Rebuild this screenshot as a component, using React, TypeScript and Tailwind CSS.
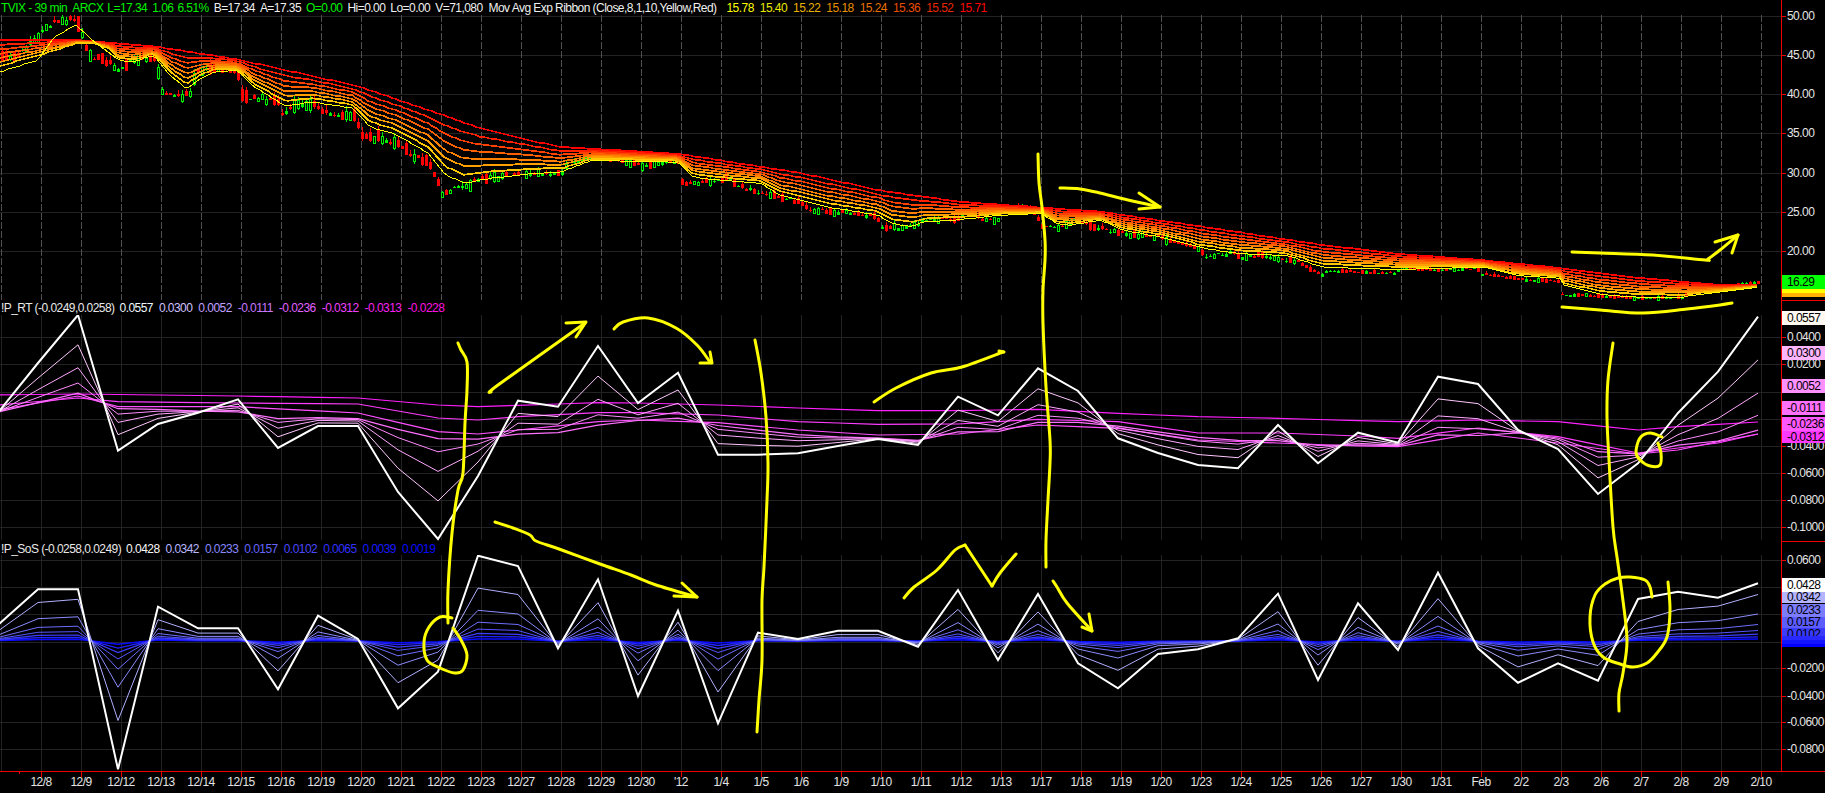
type Pt = [number, number];

const DATES = ["12/8","12/9","12/12","12/13","12/14","12/15","12/16","12/19","12/20","12/21","12/22","12/23","12/27","12/28","12/29","12/30","'12","1/4","1/5","1/6","1/9","1/10","1/11","1/12","1/13","1/17","1/18","1/19","1/20","1/23","1/24","1/25","1/26","1/27","1/30","1/31","Feb","2/2","2/3","2/6","2/7","2/8","2/9","2/10"];

const GRID_X = Array.from({ length: 45 }, (_, i) => 1.5 + 40 * i);
const dayX = (i: number) => -2 + 40 * i;

function lerp(pts: Pt[], x: number) {
  if (x <= pts[0][0]) return pts[0][1];
  for (let i = 1; i < pts.length; i++) {
    if (x <= pts[i][0]) {
      const [x0, y0] = pts[i - 1];
      const [x1, y1] = pts[i];
      return y0 + ((y1 - y0) * (x - x0)) / (x1 - x0 || 1);
    }
  }
  return pts[pts.length - 1][1];
}

const toPoints = (ys: number[]) => ys.map((y, i) => `${dayX(i)},${y.toFixed(1)}`).join(" ");

// top pane ribbon, read off the chart
const RED: Pt[] = [[0,40],[78,40],[156,46.7],[237,59.3],[357,86],[437,113],[482,129],[558,146.7],[600,149.3],[680,154],[800,173],[881,190.7],[961,202],[1041,207.7],[1100,211.7],[1202,226.7],[1322,245],[1400,254],[1480,260],[1560,268],[1640,278],[1720,285],[1757,285]];
const FAST: Pt[] = [[0,72],[38,60],[54,37],[76,25],[94,41.7],[118,60],[134,61.7],[154,55],[170,75],[187,89],[201,78],[214,71.7],[237,70],[254,86.7],[285,106],[312,101.7],[352,108],[370,126.7],[397,135],[428,153],[446,175],[464,183],[491,178],[535,173],[562,171.7],[593,160],[678,161.7],[693,177],[723,180],[760,183],[780,195],[801,200],[826,206.7],[853,210.7],[878,215],[893,224],[913,226],[925,221.7],[960,219.3],[1000,215],[1041,213],[1056,223],[1070,225],[1100,220],[1123,230],[1160,236.7],[1202,248],[1239,253.3],[1285,255],[1322,266.7],[1359,268],[1400,269],[1482,266.7],[1516,275],[1560,278],[1563,285],[1600,294],[1640,297],[1683,296.7],[1720,291.7],[1757,287.3]];
const CLUSTER: Pt[] = [[0,70],[38,58],[76,44],[94,43],[110,50],[118,60]];
const RIBBON_T = [0, 0.14, 0.28, 0.41, 0.55, 0.69, 0.84, 1];
const RIBBON_COLORS = ["#ffff00","#ffc800","#ffa000","#ff8000","#ff6000","#ff4000","#ff2000","#ff0000"];

const PRICE: Pt[] = [[0,58],[16,57],[27,48],[42,32],[54,23],[71,19],[77,17],[83,40],[89,52],[96,58],[109,63],[117,70],[134,60],[154,57],[157,70],[162,93],[170,95],[190,95],[196,73],[210,67],[230,70],[237,70],[243,97],[263,99],[277,100],[283,117],[295,103],[312,103],[326,112],[348,117],[355,113],[361,137],[384,138],[402,147],[411,155],[428,160],[435,173],[442,193],[455,187],[473,182],[504,175],[536,174],[562,173],[567,163],[598,155],[643,165],[678,160],[682,183],[710,182],[727,177],[733,183],[757,192],[780,196],[800,202],[813,210],[853,213],[877,217],[882,228],[900,227],[917,224],[922,219],[960,218],[967,209],[980,218],[997,221],[1001,210],[1033,208],[1042,227],[1067,226],[1073,218],[1097,227],[1123,233],[1160,237],[1199,248],[1204,256],[1234,252],[1239,257],[1262,255],[1299,262],[1322,275],[1327,270],[1396,273],[1401,267],[1438,270],[1480,268],[1482,274],[1507,277],[1533,280],[1560,280],[1562,294],[1600,296],[1640,298],[1683,297],[1690,292],[1722,287],[1757,282]];

// !P_RT series, one value per session
const RT_WHITE = [412.7,363,315,450.7,424,412.7,399.3,448,426,426,492,539,476,400.7,406.7,346,403,372.7,454.7,454.7,453.3,446,439,445,396.7,415.3,368.3,391,438.3,453,465,468.3,425,463.3,432.7,442.7,376.7,384,430,449,494,463.3,413,371.7,316.7];
const RT_BASE = [412,406,400,405,408,411,413,416,417,418,424,430,436,437,435,432,422,422,423,428,433,436,438,440,435,433,427,425,425,430,435,438,442,444,446,446,440,440,433,437,448,453,448,447,440];
const RT_FACTORS: [number, string, number][] = [
  [0.08, "#ff70ff", 1.2],
  [0.2, "#ff8cff", 1],
  [0.38, "#ffa8ff", 1],
  [0.65, "#ffc8ff", 1],
];
const RT_SLOW: { color: string; pts: Pt[] }[] = [
  { color: "#ff20ff", pts: [[-1,395],[1,394],[5,396],[8,398],[10,405],[11,406.7],[14,402.7],[15,403],[17,405],[19,408],[21,410.7],[23,410.7],[25,409.3],[27,413.3],[29,416.7],[31,418.3],[33,420.7],[34,421.7],[36,420],[38,421.7],[40,430],[41,426.7],[43,422]] },
  { color: "#ff3cff", pts: [[-1,405],[1,398],[2,401.7],[5,403],[8,404],[10,418],[11,420],[12,416.7],[14,412.7],[15,412.7],[17,415],[19,421.7],[21,424.3],[23,424],[25,419.3],[27,421.7],[29,433],[31,433],[33,436],[34,438.3],[36,428],[38,436.7],[40,453],[41,448],[42,443],[43,434]] },
  { color: "#ff50ff", pts: [[-1,410],[1,396],[2,406.7],[5,406.7],[8,413],[10,431.7],[11,434],[12,430],[14,421.7],[15,420],[17,422.7],[19,430],[21,435],[23,434],[25,425],[27,428.3],[29,440],[31,443],[33,446],[34,446.7],[36,433],[38,443],[40,454],[41,450],[42,441.7],[43,434]] },
];

// !P_SoS series
const SOS_WHITE = [625,589.3,589.3,769.3,606.7,628.3,628.3,689.3,615.7,639,708.3,671.7,555.7,566,648.3,579.3,696,610.7,723.3,632.7,639,630.7,630.7,646.7,590,660,594,663.3,688.3,654,649.3,638.3,593.7,680,603.3,650,572.7,648.3,682.7,663.3,680.7,599,591.7,597.7,583.3];
const SOS_ZERO = 641;
const SOS_RAMP: Record<number, number> = { 1: 1.2, 2: 1.3, 41: 0.75, 42: 1.03, 43: 1.3, 44: 1.3 };
const SOS_LINES: [number, string, number][] = [
  [0.025, "#0a0aff", 1.5],
  [0.055, "#2222ff", 1.3],
  [0.09, "#3c3cff", 1.2],
  [0.14, "#5555ff", 1],
  [0.22, "#6e6eff", 1],
  [0.36, "#8c8cff", 1],
  [0.62, "#b0b0ff", 1],
];

type Tag = { y: number; h: number; text: string; bg: string };

const TOP_LABELS: [string, number][] = [["50.00",16],["45.00",55],["40.00",94],["35.00",133],["30.00",173],["25.00",212],["20.00",251]];
const RT_LABELS: [string, number][] = [["0.0400",337],["0.0200",364],["-0.0400",446],["-0.0600",473],["-0.0800",500],["-0.1000",527]];
const SOS_LABELS: [string, number][] = [["0.0600",560],["-0.0200",668],["-0.0400",696],["-0.0600",722],["-0.0800",749]];

const TOP_TAGS: Tag[] = [
  { y: 289, h: 4, text: "", bg: "#ffff00" },
  { y: 293, h: 4, text: "", bg: "#ffb000" },
  { y: 275, h: 14, text: "16.29", bg: "#00ff00" },
];
const RT_TAGS: Tag[] = [
  { y: 311, h: 14, text: "0.0557", bg: "#fff8f0" },
  { y: 346, h: 14, text: "0.0300", bg: "#ffb4ff" },
  { y: 379, h: 14, text: "0.0052", bg: "#ff90ff" },
  { y: 401, h: 14, text: "-0.0111", bg: "#ff70ff" },
  { y: 417, h: 14, text: "-0.0236", bg: "#ff58ff" },
  { y: 431, h: 12, text: "-0.0312", bg: "#ff38ff" },
];
const SOS_TAGS: Tag[] = [
  { y: 578, h: 14, text: "0.0428", bg: "#ffffff" },
  { y: 592, h: 11, text: "0.0342", bg: "#b4b4ff" },
  { y: 604, h: 13, text: "0.0233", bg: "#7c7cff" },
  { y: 617, h: 11, text: "0.0157", bg: "#5c5cff" },
  { y: 628, h: 8, text: "0.0102", bg: "#3c3cff" },
  { y: 636, h: 4, text: "", bg: "#2828ff" },
  { y: 640, h: 4, text: "", bg: "#1414ff" },
  { y: 644, h: 3, text: "", bg: "#0000ff" },
];

const HEAD_TOP: { text: string; color: string; left: string }[] = [
  { text: "TVIX - 39 min", color: "text-[#00f000]", left: "ml-px" },
  { text: "ARCX", color: "text-[#00f000]", left: "ml-[5px]" },
  { text: "L=17.34", color: "text-[#00f000]", left: "ml-[4px]" },
  { text: "1.06", color: "text-[#00f000]", left: "ml-[5px]" },
  { text: "6.51%", color: "text-[#00f000]", left: "ml-[4px]" },
  { text: "B=17.34", color: "text-[#f0f0f0]", left: "ml-[5px]" },
  { text: "A=17.35", color: "text-[#f0f0f0]", left: "ml-[5px]" },
  { text: "O=0.00", color: "text-[#00f000]", left: "ml-[5px]" },
  { text: "Hi=0.00", color: "text-[#f0f0f0]", left: "ml-[5px]" },
  { text: "Lo=0.00", color: "text-[#f0f0f0]", left: "ml-[5px]" },
  { text: "V=71,080", color: "text-[#f0f0f0]", left: "ml-[5px]" },
  { text: "Mov Avg Exp Ribbon (Close,8,1,10,Yellow,Red)", color: "text-[#f0f0f0]", left: "ml-[6px]" },
  { text: "15.78", color: "text-[#ffff00]", left: "ml-[10px]" },
  { text: "15.40", color: "text-[#e8e800]", left: "ml-[6px]" },
  { text: "15.22", color: "text-[#e8b000]", left: "ml-[6px]" },
  { text: "15.18", color: "text-[#e89000]", left: "ml-[6px]" },
  { text: "15.24", color: "text-[#e87000]", left: "ml-[6px]" },
  { text: "15.36", color: "text-[#e84c00]", left: "ml-[6px]" },
  { text: "15.52", color: "text-[#e82800]", left: "ml-[6px]" },
  { text: "15.71", color: "text-[#ff0000]", left: "ml-[6px]" },
];
const HEAD_RT: [string, string][] = [["0.0557","text-[#f0f8ff]"],["0.0300","text-[#d0c0ff]"],["0.0052","text-[#c0a0ff]"],["-0.0111","text-[#c878ff]"],["-0.0236","text-[#e060ff]"],["-0.0312","text-[#f040ff]"],["-0.0313","text-[#f820f0]"],["-0.0228","text-[#ff10e0]"]];
const HEAD_SOS: [string, string][] = [["0.0428","text-[#f8f8f8]"],["0.0342","text-[#b8b8ff]"],["0.0233","text-[#8888ff]"],["0.0157","text-[#6464ff]"],["0.0102","text-[#4848ff]"],["0.0065","text-[#3030ff]"],["0.0039","text-[#1818ff]"],["0.0019","text-[#0808ff]"]];

// marker annotations drawn by hand over the chart
const SCRIBBLES: Pt[][] = [
  [[1572,252],[1600,253],[1653,255],[1705,260],[1708,259],[1720,250],[1738,235]],
  [[1562,307],[1600,310],[1643,313],[1687,309],[1720,305],[1732,303]],
  [[1038,154],[1039,183],[1042,207],[1045,240],[1045,260],[1043,290],[1043,323],[1046,387],[1050,440],[1050,463],[1048,500],[1046,540],[1046,567]],
  [[1060,188],[1080,189],[1100,193],[1128,200],[1160,207]],
  [[458,343],[461,350],[467,362],[467,390],[465,423],[463,473],[458,490],[452,533],[448,590],[448,623]],
  [[452,618],[440,617],[429,627],[424,642],[427,660],[440,668],[455,673],[463,670],[467,655],[461,640],[453,628]],
  [[491,392],[498,385],[585,323]],
  [[614,329],[623,322],[648,318],[676,328],[697,345],[710,362]],
  [[755,340],[761,373],[766,417],[768,463],[767,500],[764,567],[762,600],[762,660],[759,700],[757,732]],
  [[874,402],[896,388],[931,373],[962,367],[1003,352]],
  [[1613,343],[1608,380],[1607,417],[1609,460],[1613,527],[1617,557],[1622,593],[1627,640],[1623,673],[1619,693],[1619,711]],
  [[1662,437],[1650,433],[1640,438],[1636,452],[1640,460],[1650,466],[1660,465],[1661,453],[1658,443]],
  [[1652,597],[1650,587],[1645,580],[1630,577],[1618,578],[1605,584],[1595,595],[1590,617],[1593,642],[1603,657],[1620,664],[1633,667],[1647,663],[1657,653],[1667,637],[1670,610],[1668,582]],
  [[495,522],[513,528],[530,535],[536,541],[559,549],[600,564],[631,575],[656,585],[697,597]],
  [[904,598],[914,587],[937,570],[955,550],[965,545]],
  [[965,545],[992,586]],
  [[992,586],[1000,573],[1016,554]],
  [[1053,581],[1057,587],[1067,603],[1092,631]],
];
const HEADS: Pt[][] = [
  [[1715,242],[1738,235],[1732,253]],
  [[1139,193],[1160,207],[1139,209]],
  [[566,323],[586,322],[576,337]],
  [[710,352],[712,363],[700,363]],
  [[999,351],[1004,352]],
  [[682,583],[697,597],[674,596]],
  [[1089,614],[1092,631],[1082,627]],
];

function smooth(pts: Pt[]) {
  let d = `M${pts[0][0]} ${pts[0][1]}`;
  for (let i = 0; i < pts.length - 1; i++) {
    const p0 = pts[i - 1] ?? pts[i];
    const p1 = pts[i];
    const p2 = pts[i + 1];
    const p3 = pts[i + 2] ?? p2;
    const c1x = p1[0] + (p2[0] - p0[0]) / 6;
    const c1y = p1[1] + (p2[1] - p0[1]) / 6;
    const c2x = p2[0] - (p3[0] - p1[0]) / 6;
    const c2y = p2[1] - (p3[1] - p1[1]) / 6;
    d += ` C${c1x} ${c1y} ${c2x} ${c2y} ${p2[0]} ${p2[1]}`;
  }
  return d;
}

function Candles() {
  let seed = 17;
  const rnd = () => {
    seed = (seed * 16807) % 2147483647;
    return seed / 2147483647;
  };
  const bars = [];
  for (let x = 2; x < 1760; x += 4) {
    const scale = x < 500 ? 1.25 : x < 1300 ? 0.8 : 0.4;
    const c = lerp(PRICE, x) + (rnd() - 0.5) * 4 * scale;
    const next = lerp(PRICE, x + 4);
    let up = next < c - 0.1;
    if (rnd() < 0.16) up = !up;
    const r = rnd();
    const h = Math.max(0, Math.round((r * r * 9 + Math.abs(next - c) * 0.3) * scale));
    const top = Math.round(c - h / 2);
    const wick = Math.round(rnd() * 4 * scale);
    const color = up ? "#00ee00" : "#ff0000";
    bars.push(
      <g key={x}>
        <line x1={x + 0.5} x2={x + 0.5} y1={top - wick} y2={top + h + wick * 0.6} stroke={color} />
        {up && h > 2 ? (
          <rect x={x - 0.5} y={top + 0.5} width={2} height={h} fill="#000" stroke={color} />
        ) : (
          <rect x={x - 1} y={top} width={3} height={h + 1} fill={color} />
        )}
      </g>
    );
  }
  return <g shapeRendering="crispEdges">{bars}</g>;
}

function TopChart() {
  const xs: number[] = [];
  for (let x = 0; x <= 1757; x += 4) xs.push(x);
  xs.push(1757);
  return (
    <svg viewBox="0 15 1781 286" className="block w-[1781px] h-[286px]">
      <g shapeRendering="crispEdges">
        {TOP_LABELS.map(([t, y]) => (
          <line key={t} x1={0} x2={1781} y1={y + 0.5} y2={y + 0.5} stroke="#222" />
        ))}
        {GRID_X.map((x) => (
          <line key={x} x1={x} x2={x} y1={15} y2={300} stroke="#505050" strokeDasharray="7 2" />
        ))}
      </g>
      <Candles />
      <g fill="none" shapeRendering="crispEdges">
        {RIBBON_T.map((t, k) => {
          const pts = xs.map((x) => {
            const low = k > 0 && x < 118 ? lerp(CLUSTER, x) : lerp(FAST, x);
            const y = low + (lerp(RED, x) - low) * t;
            return `${x},${Math.round(y)}`;
          });
          return <polyline key={k} points={pts.join(" ")} stroke={RIBBON_COLORS[k]} strokeWidth={k === 0 ? 1 : 1.5} />;
        }).reverse()}
      </g>
    </svg>
  );
}

function SoftGrid({ ys, top, bottom }: { ys: [string, number][]; top: number; bottom: number }) {
  return (
    <g shapeRendering="crispEdges" stroke="#232323">
      {ys.map(([t, y]) => (
        <line key={t} x1={0} x2={1781} y1={y + 0.5} y2={y + 0.5} />
      ))}
      {GRID_X.map((x) => (
        <line key={x} x1={x} x2={x} y1={top} y2={bottom} />
      ))}
    </g>
  );
}

function RtChart() {
  return (
    <svg viewBox="0 315 1781 227" className="block w-[1781px] h-[227px]">
      <SoftGrid
        ys={[...RT_LABELS, ["0.0000", 391.5], ["-0.0200", 419]]}
        top={315}
        bottom={540}
      />
      <g fill="none">
        {RT_SLOW.map((l) => (
          <polyline
            key={l.color}
            points={RT_WHITE.map((_, i) => `${dayX(i)},${lerp(l.pts, i - 1).toFixed(1)}`).join(" ")}
            stroke={l.color}
            strokeWidth={1.2}
          />
        ))}
        {RT_FACTORS.map(([f, color, w]) => (
          <polyline
            key={color}
            points={toPoints(RT_WHITE.map((y, i) => RT_BASE[i] + (y - RT_BASE[i]) * f))}
            stroke={color}
            strokeWidth={w}
          />
        ))}
        <polyline points={toPoints(RT_WHITE)} stroke="#fff" strokeWidth={2} />
      </g>
    </svg>
  );
}

function SosChart() {
  return (
    <svg viewBox="0 555 1781 216" className="block w-[1781px] h-[216px]">
      <SoftGrid ys={[...SOS_LABELS, ["0.0400", 587], ["0.0200", 614], ["0.0000", 642]]} top={555} bottom={771} />
      <g fill="none">
        {SOS_LINES.map(([f, color, w]) => (
          <polyline
            key={color}
            points={toPoints(
              SOS_WHITE.map((y, i) => SOS_ZERO + (y - SOS_ZERO) * Math.min(1, f * (SOS_RAMP[i] ?? 1)))
            )}
            stroke={color}
            strokeWidth={w}
          />
        ))}
        <polyline points={toPoints(SOS_WHITE)} stroke="#fff" strokeWidth={2} />
      </g>
    </svg>
  );
}

function Axis({ origin, labels, tags, className }: { origin: number; labels: [string, number][]; tags: Tag[]; className: string }) {
  return (
    <div className={`relative w-[44px] border-l border-[#f00000] ${className}`}>
      {labels.map(([t, y]) => (
        <div key={t} className="absolute left-0 flex items-center h-[14px] text-[#e4e4e4]" style={{ top: y - origin - 7 }}>
          <span className="w-[4px] h-px bg-[#f00000] mr-px" />
          {t}
        </div>
      ))}
      {tags.map((tag, i) => (
        <div
          key={i}
          className="absolute left-0 right-0 pl-[5px] text-black overflow-hidden"
          style={{ top: tag.y - origin, height: tag.h, lineHeight: `${tag.h < 11 ? 12 : tag.h}px`, background: tag.bg }}
        >
          {tag.text}
        </div>
      ))}
    </div>
  );
}

function Values({ name, items }: { name: string; items: [string, string][] }) {
  return (
    <div className="flex items-center h-full pl-px text-[#e8e8e8]">
      <span className="mr-[5px]">{name}</span>
      {items.map(([t, c]) => (
        <span key={t} className={`${c} mr-[6px]`}>
          {t}
        </span>
      ))}
    </div>
  );
}

export default function App() {
  return (
    <div
      className="relative w-[1825px] h-[793px] bg-black overflow-hidden text-[12px] tracking-[-0.55px] whitespace-nowrap"
      style={{ fontFamily: '"Liberation Sans", Arial, sans-serif' }}
    >
      <div className="flex">
        <div className="w-[1781px]">
          <div className="flex items-center h-[15px]">
            {HEAD_TOP.map((h) => (
              <span key={h.text} className={`${h.color} ${h.left}`}>
                {h.text}
              </span>
            ))}
          </div>
          <TopChart />
        </div>
        <Axis origin={0} labels={TOP_LABELS} tags={TOP_TAGS} className="h-[301px] border-b" />
      </div>

      <div className="flex">
        <div className="w-[1781px]">
          <div className="h-[14px]">
            <Values name="!P_RT (-0.0249,0.0258)" items={HEAD_RT} />
          </div>
          <RtChart />
        </div>
        <Axis origin={301} labels={RT_LABELS} tags={RT_TAGS} className="h-[241px] border-b" />
      </div>

      <div className="flex">
        <div className="w-[1781px]">
          <div className="h-[13px]">
            <Values name="!P_SoS (-0.0258,0.0249)" items={HEAD_SOS} />
          </div>
          <SosChart />
        </div>
        <Axis origin={542} labels={SOS_LABELS} tags={SOS_TAGS} className="h-[229px]" />
      </div>

      <div className="flex h-[22px] border-t border-[#f00000]">
        <div className="w-[21px]">
          <div className="ml-[19px] w-px h-[2px] bg-[#f00000]" />
        </div>
        {DATES.map((d) => (
          <div key={d} className="flex flex-col items-center w-[40px] text-[#e4e4e4]">
            <span className="w-px h-[5px] bg-[#f00000]" />
            <span className="leading-[11px]">{d}</span>
          </div>
        ))}
      </div>

      <svg viewBox="0 0 1825 793" className="absolute inset-0 w-[1825px] h-[793px] pointer-events-none">
        <g fill="none" stroke="#ffff00" strokeWidth={3} strokeLinecap="round" strokeLinejoin="round">
          {SCRIBBLES.map((s, i) => (
            <path key={i} d={smooth(s)} />
          ))}
          {HEADS.map((s, i) => (
            <polyline key={i} points={s.map((p) => p.join(",")).join(" ")} />
          ))}
        </g>
      </svg>
    </div>
  );
}
